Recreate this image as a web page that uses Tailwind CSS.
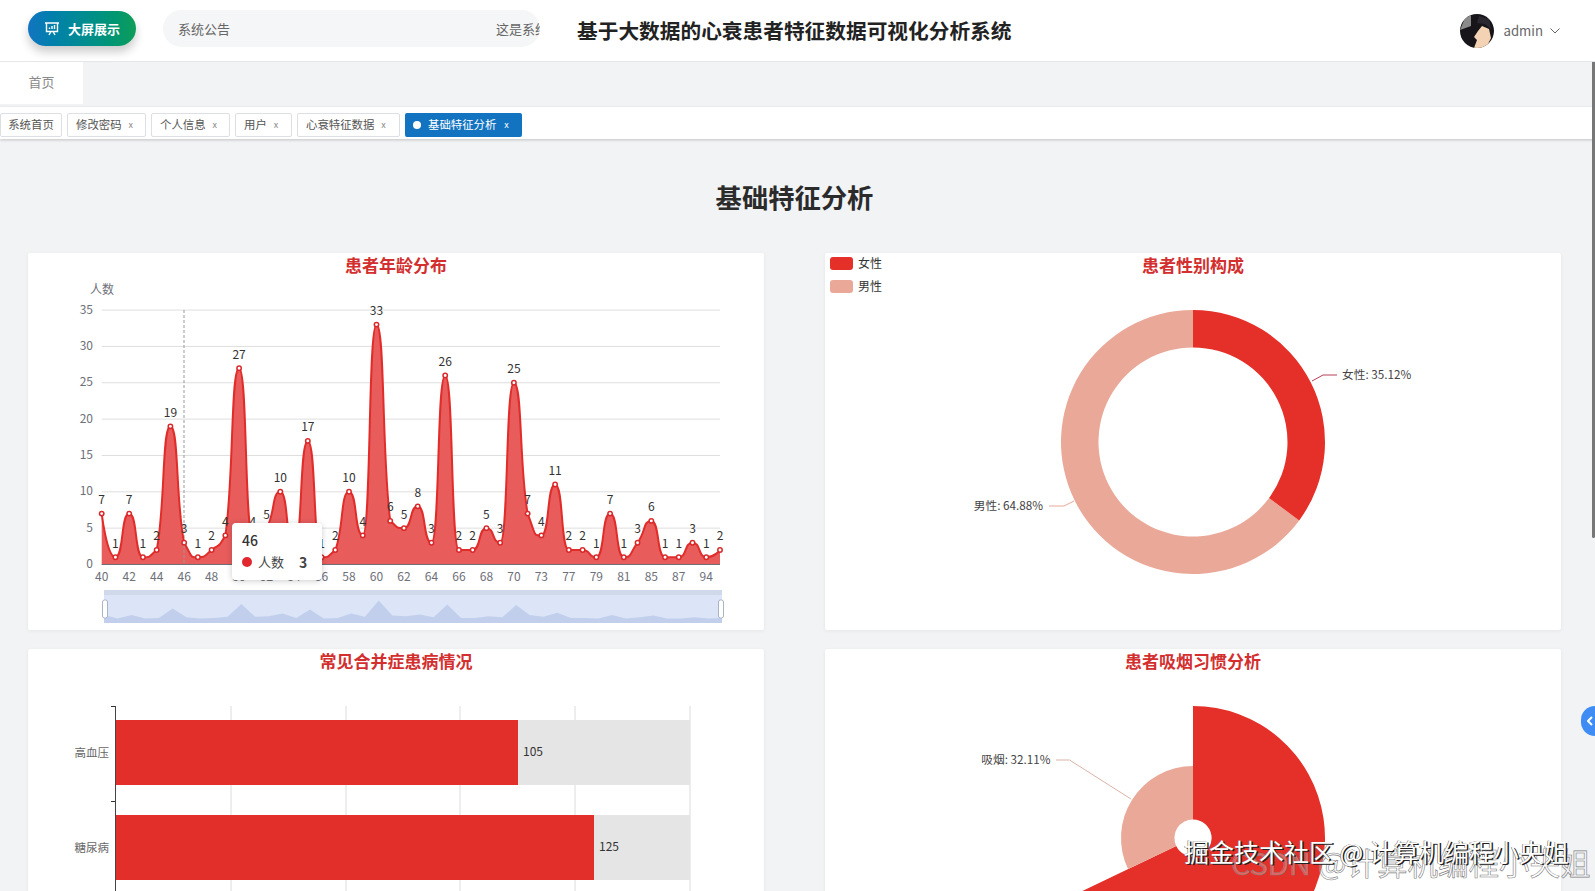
<!DOCTYPE html>
<html lang="zh-CN">
<head>
    <meta charset="UTF-8">
    <title>基础特征分析</title>
    <script src="https://cdn.jsdelivr.net/npm/@tailwindcss/browser@4"></script>
</head>
<body class="h-[891px] overflow-hidden bg-[#f2f3f5] font-['Noto_Sans_CJK_SC','Liberation_Sans',sans-serif] text-[#333]">
    <div class="relative h-[891px] overflow-hidden">
        <!-- Header -->
        <header class="relative z-10 flex h-[62px] items-center bg-white border-b border-[#e4e6e8]">
            <div class="ml-[28px] mb-[4px] flex h-[35px] w-[108px] items-center justify-center gap-[8px] rounded-full bg-gradient-to-r from-[#1274c0] to-[#0f9d58] text-[13px] font-bold text-white shadow-[0_6px_10px_rgba(0,0,0,0.2)]">
                <svg width="16" height="16" viewBox="0 0 16 16" fill="none" stroke="currentColor" stroke-width="1.4"><path d="M1 2h14M2.5 2v8.5h11V2M5 14l2-3.500M11 14L9 10.500M5.500 8V6.500M8 8V5M10.500 8V4"/></svg>
                <span>大屏展示</span>
            </div>
            <div class="ml-[27px] mb-[4px] flex h-[37px] w-[377px] items-center overflow-hidden rounded-full bg-[#f5f6f7] pl-[15px] text-[13px] text-[#666]">
                <span class="w-[318px] shrink-0">系统公告</span>
                <span class="whitespace-nowrap">这是系统公告</span>
            </div>
            <h1 class="ml-[37px] text-[20.7px] font-bold text-[#222]">基于大数据的心衰患者特征数据可视化分析系统</h1>
            <div class="ml-auto mr-[35px] flex items-center">
                <svg class="rounded-full" width="34" height="34" viewBox="0 0 34 34">
                    <rect width="34" height="34" fill="#17151a"/>
                    <path d="M0 16L5 4l6-3v11z" fill="#8a8a8a"/>
                    <path d="M14 34l3-8-3-3 4-6 4-5 7 3 2 9-5 10z" fill="#f3d3b4"/>
                    <path d="M17 9l8 1 6 5-2-10-10-3z" fill="#2a2730"/>
                </svg>
                <span class="ml-[10px] text-[13.2px] text-[#666]">admin</span>
                <svg class="ml-[7px]" width="10" height="6" viewBox="0 0 10 6" fill="none" stroke="#666" stroke-width="1"><path d="M.5.5L5 5 9.500.5"/></svg>
            </div>
        </header>

        <!-- Nav tab -->
        <nav class="flex h-[42px]">
            <div class="flex w-[83px] items-center justify-center bg-white pb-[2px] text-[13px] text-[#8a8a8a]">首页</div>
        </nav>

        <!-- Tag bar -->
        <div class="mt-[3px] flex h-[32px] items-center gap-[5px] bg-white pt-[4px] text-[11.4px] text-[#555] shadow-[0_1px_3px_rgba(0,0,0,0.2)]">
            <div class="flex h-[24px] w-[62px] items-center justify-center rounded-[2px] border border-[#dcdfe6]">系统首页</div>
            <div class="flex h-[24px] w-[79px] items-center gap-[7px] rounded-[2px] border border-[#dcdfe6] pl-[8px]">修改密码<span class="text-[9px] text-[#888]">x</span></div>
            <div class="flex h-[24px] w-[79px] items-center gap-[7px] rounded-[2px] border border-[#dcdfe6] pl-[8px]">个人信息<span class="text-[9px] text-[#888]">x</span></div>
            <div class="flex h-[24px] w-[57px] items-center gap-[7px] rounded-[2px] border border-[#dcdfe6] pl-[8px]">用户<span class="text-[9px] text-[#888]">x</span></div>
            <div class="flex h-[24px] w-[103px] items-center gap-[7px] rounded-[2px] border border-[#dcdfe6] pl-[8px]">心衰特征数据<span class="text-[9px] text-[#888]">x</span></div>
            <div class="flex h-[24px] w-[117px] items-center rounded-[2px] bg-[#1274c0] pl-[8px] text-white"><span class="mr-[7px] h-[8px] w-[8px] rounded-full bg-white"></span>基础特征分析<span class="ml-[8px] text-[9px]">x</span></div>
        </div>

        <!-- Page content -->
        <main class="pl-[28px] pr-[34px]">
            <h2 class="mt-[39px] mb-[37px] h-[38px] text-center text-[26.3px] leading-[38px] font-bold text-[#2b2b2b]">基础特征分析</h2>
            <div class="grid grid-cols-[736px_736px] gap-x-[61px] gap-y-[19px]">
                <section class="relative h-[377px] rounded-[2px] bg-white shadow-[0_1px_4px_rgba(0,0,0,0.06)]">
                    <h3 class="pt-[1px] text-center text-[17px] leading-[22px] font-bold text-[#d32f2f]">患者年龄分布</h3>
                    <svg id="ageChart" class="absolute top-0 left-0" width="736" height="377"></svg>
                    <!-- Tooltip -->
                    <div class="absolute top-[270px] left-[204px] h-[57px] w-[90px] rounded-[4px] bg-white pt-[6px] pl-[10px] shadow-[0_1px_6px_rgba(0,0,0,0.2)]">
                        <div class="text-[14px] leading-[22px] font-medium text-[#333]">46</div>
                        <div class="flex items-center text-[13px] leading-[22px] text-[#444]">
                            <span class="h-[10px] w-[10px] rounded-full bg-[#e0282e]"></span>
                            <span class="ml-[6px]">人数</span>
                            <span class="ml-[15px] text-[14px] font-bold">3</span>
                        </div>
                    </div>
                </section>
                <section class="relative h-[377px] rounded-[2px] bg-white shadow-[0_1px_4px_rgba(0,0,0,0.06)]">
                    <h3 class="pt-[1px] text-center text-[17px] leading-[22px] font-bold text-[#d32f2f]">患者性别构成</h3>
                    <div class="absolute top-[4px] left-[5px] flex flex-col gap-[10px] text-[12px] text-[#333]">
                        <div class="flex h-[13px] items-center gap-[5px]"><span class="h-[13px] w-[23px] rounded-[3px] bg-[#e53029]"></span><span class="-mt-[2px]">女性</span></div>
                        <div class="flex h-[13px] items-center gap-[5px]"><span class="h-[13px] w-[23px] rounded-[3px] bg-[#eaa899]"></span><span class="-mt-[2px]">男性</span></div>
                    </div>
                    <svg id="genderChart" class="absolute top-0 left-0" width="737" height="377"></svg>
                </section>
                <section class="relative h-[377px] rounded-[2px] bg-white shadow-[0_1px_4px_rgba(0,0,0,0.06)]">
                    <h3 class="pt-[1px] text-center text-[17px] leading-[22px] font-bold text-[#d32f2f]">常见合并症患病情况</h3>
                    <svg id="diseaseChart" class="absolute top-0 left-0" width="736" height="377"></svg>
                </section>
                <section class="relative h-[377px] rounded-[2px] bg-white shadow-[0_1px_4px_rgba(0,0,0,0.06)]">
                    <h3 class="pt-[1px] text-center text-[17px] leading-[22px] font-bold text-[#d32f2f]">患者吸烟习惯分析</h3>
                    <svg id="smokeChart" class="absolute top-0 left-0" width="737" height="377"></svg>
                </section>
            </div>
        </main>

        <!-- Scrollbar -->
        <div class="absolute top-[12px] right-0 h-[526px] w-[3px] rounded-full bg-[#777]"></div>

        <!-- Side toggle -->
        <div class="absolute top-[706px] right-0 flex h-[30px] w-[14px] items-center rounded-l-full bg-[#3f8cf5] pl-[6px]">
            <svg width="6" height="10" viewBox="0 0 6 10" fill="none" stroke="white" stroke-width="2"><path d="M5 1L1 5l4 4"/></svg>
        </div>

        <!-- Video watermarks -->
        <div class="absolute top-[840px] left-[1231px] text-[30.5px] leading-[44px] whitespace-nowrap text-white/25 [-webkit-text-stroke:0.6px_#7f7f7f]">CSDN @计算机编程小央姐</div>
        <div class="absolute top-[833px] left-[1184px] text-[25px] leading-[36px] whitespace-nowrap text-white [text-shadow:1.5px_1px_0_#222,-0.5px_0_0_#555]">掘金技术社区 @ 计算机编程小央姐</div>
    </div>

    <script>
        const NS = 'http://www.w3.org/2000/svg'
        const FONT = '"Noto Sans CJK SC","Liberation Sans",sans-serif'

        function add(svg, tag, attrs, text) {
            const el = document.createElementNS(NS, tag)
            for (const k in attrs) el.setAttribute(k, attrs[k])
            if (text !== undefined) el.textContent = text
            svg.appendChild(el)
            return el
        }

        function label(svg, x, y, text, fill, anchor, size) {
            add(svg, 'text', { x, y, fill, 'text-anchor': anchor || 'middle', 'font-size': size || 12, 'font-family': FONT }, text)
        }

        function arc(cx, cy, r, r0, from, to) {
            const p = (rad, a) => {
                const t = a * Math.PI / 180
                return (cx + rad * Math.sin(t)).toFixed(2) + ' ' + (cy - rad * Math.cos(t)).toFixed(2)
            }
            const big = to - from > 180 ? 1 : 0
            return `M${p(r, from)}A${r} ${r} 0 ${big} 1 ${p(r, to)}L${p(r0, to)}A${r0} ${r0} 0 ${big} 0 ${p(r0, from)}Z`
        }

        // same smoothing idea as an echarts smooth line
        function smoothPath(pts, smooth) {
            let d = `M${pts[0][0]} ${pts[0][1]}`
            const clamp = (v, a, b) => Math.max(Math.min(a, b), Math.min(Math.max(a, b), v))
            let cpx = pts[0][0], cpy = pts[0][1]
            for (let i = 1; i < pts.length; i++) {
                const [x, y] = pts[i]
                const [px, py] = pts[i - 1]
                const next = pts[i + 1]
                if (!next) {
                    d += `C${cpx} ${cpy} ${x} ${y} ${x} ${y}`
                    break
                }
                const vy = next[1] - py
                let c1y = y - vy * smooth * 0.5
                let c2y = y + vy * smooth * 0.5
                if ((y - py) * (next[1] - y) <= 0) { c1y = y; c2y = y }
                c1y = clamp(c1y, py, y)
                c2y = clamp(c2y, y, next[1])
                const c1x = x - (next[0] - px) * smooth * 0.5
                d += `C${cpx} ${cpy} ${c1x} ${c1y} ${x} ${y}`
                cpx = x + (next[0] - px) * smooth * 0.5
                cpy = c2y
            }
            return d
        }

        // Age chart, offsets are from the card corner (28, 254)
        const ages = [7,1,7,1,2,19,3,1,2,4,27,4,5,10,2,17,1,2,10,4,33,6,5,8,3,26,2,2,5,3,25,7,4,11,2,2,1,7,1,3,6,1,1,3,1,2]
        const ageTicks = [40,42,44,46,48,50,52,54,56,58,60,62,64,66,68,70,73,77,79,81,85,87,94]
        const ageSvg = document.getElementById('ageChart')
        const x0 = 73.7, stepX = 13.74, y0 = 311.5, unit = 7.27
        const pts = ages.map((v, i) => [+(x0 + i * stepX).toFixed(2), +(y0 - v * unit).toFixed(2)])

        for (let v = 0; v <= 35; v += 5) {
            const y = y0 - v * unit
            if (v) add(ageSvg, 'line', { x1: x0, x2: 692, y1: y, y2: y, stroke: '#dedede' })
            label(ageSvg, 65, y + 3.5, v, '#6e7079', 'end')
        }
        label(ageSvg, 74, 41, '人数', '#6e7079')

        const line = smoothPath(pts, 0.62)
        add(ageSvg, 'path', { d: `${line}L${pts[45][0]} ${y0}L${x0} ${y0}Z`, fill: '#e85c5c' })
        add(ageSvg, 'line', { x1: x0, x2: 692, y1: y0, y2: y0, stroke: '#6e7079' })
        add(ageSvg, 'line', { x1: 156, x2: 156, y1: 57, y2: y0, stroke: '#999', 'stroke-dasharray': '3 2' })
        add(ageSvg, 'path', { d: line, fill: 'none', stroke: '#e12d2a', 'stroke-width': 2 })
        pts.forEach((p, i) => {
            add(ageSvg, 'circle', { cx: p[0], cy: p[1], r: 2.2, fill: '#fff', stroke: '#d9282a', 'stroke-width': 1.5 })
            label(ageSvg, p[0], p[1] - 9.5, ages[i], '#333')
        })
        ageTicks.forEach((t, i) => label(ageSvg, x0 + i * 2 * stepX, 328, t, '#6e7079'))

        // data zoom under the age chart
        add(ageSvg, 'rect', { x: 76, y: 337, width: 618, height: 33, fill: '#dbe5f7' })
        add(ageSvg, 'rect', { x: 76, y: 337, width: 618, height: 5, fill: '#d0d9ea' })
        const mini = ages.map((v, i) => `${(76 + i * 618 / 45).toFixed(1)} ${(366 - v * 0.56).toFixed(1)}`)
        add(ageSvg, 'path', { d: `M76 370L${mini.join('L')}L694 370Z`, fill: '#c2cfec' })
        add(ageSvg, 'rect', { x: 74.500, y: 347, width: 5, height: 18, rx: 2, fill: '#fff', stroke: '#aab4c4' })
        add(ageSvg, 'rect', { x: 690.500, y: 347, width: 5, height: 18, rx: 2, fill: '#fff', stroke: '#aab4c4' })

        // Gender donut, card corner (825, 254)
        const gender = document.getElementById('genderChart')
        const gcx = 368, gcy = 189
        add(gender, 'path', { d: arc(gcx, gcy, 132, 94.500, 126.43, 360), fill: '#eaa899' })
        add(gender, 'path', { d: arc(gcx, gcy, 132, 94.500, 0, 126.43), fill: '#e53029' })
        add(gender, 'path', { d: 'M487 128L498 122H512', fill: 'none', stroke: '#b8405a' })
        add(gender, 'path', { d: 'M249 248L239 253H224', fill: 'none', stroke: '#eaa899' })
        label(gender, 517, 126, '女性: 35.12%', '#444', 'start', 11.7)
        label(gender, 218, 257, '男性: 64.88%', '#444', 'end', 11.7)

        // Comorbidity bars, card corner (28, 649)
        const bars = document.getElementById('diseaseChart')
        ;[203, 318, 432, 547, 662].forEach(x => {
            add(bars, 'line', { x1: x, x2: x, y1: 57, y2: 377, stroke: '#dcdcdc' })
        })
        ;[[71, '高血压', 403, '105'], [166, '糖尿病', 479, '125']].forEach(b => {
            add(bars, 'rect', { x: 87, y: b[0], width: 575, height: 65, fill: '#e5e5e5' })
            add(bars, 'rect', { x: 87, y: b[0], width: b[2], height: 65, fill: '#e32f29' })
            label(bars, 81, b[0] + 37, b[1], '#666', 'end', 11.5)
            label(bars, 87 + b[2] + 5, b[0] + 36, b[3], '#333', 'start')
        })
        add(bars, 'line', { x1: 87.500, x2: 87.500, y1: 57, y2: 377, stroke: '#444' })
        ;[57.5, 152.5, 246.5].forEach(y => add(bars, 'line', { x1: 83, x2: 87, y1: y, y2: y, stroke: '#333' }))

        // Smoking rose pie, card corner (825, 649)
        const smoke = document.getElementById('smokeChart')
        const scx = 368, scy = 189
        add(smoke, 'path', { d: arc(scx, scy, 132, 18.600, 0, 244.4), fill: '#e53029' })
        add(smoke, 'path', { d: arc(scx, scy, 72, 18.600, 244.4, 360), fill: '#eaa899' })
        add(smoke, 'path', { d: 'M306 150L244.500 111H231', fill: 'none', stroke: '#d9b3a9' })
        label(smoke, 225.500, 115, '吸烟: 32.11%', '#444', 'end', 11.7)
    </script>
</body>
</html>
